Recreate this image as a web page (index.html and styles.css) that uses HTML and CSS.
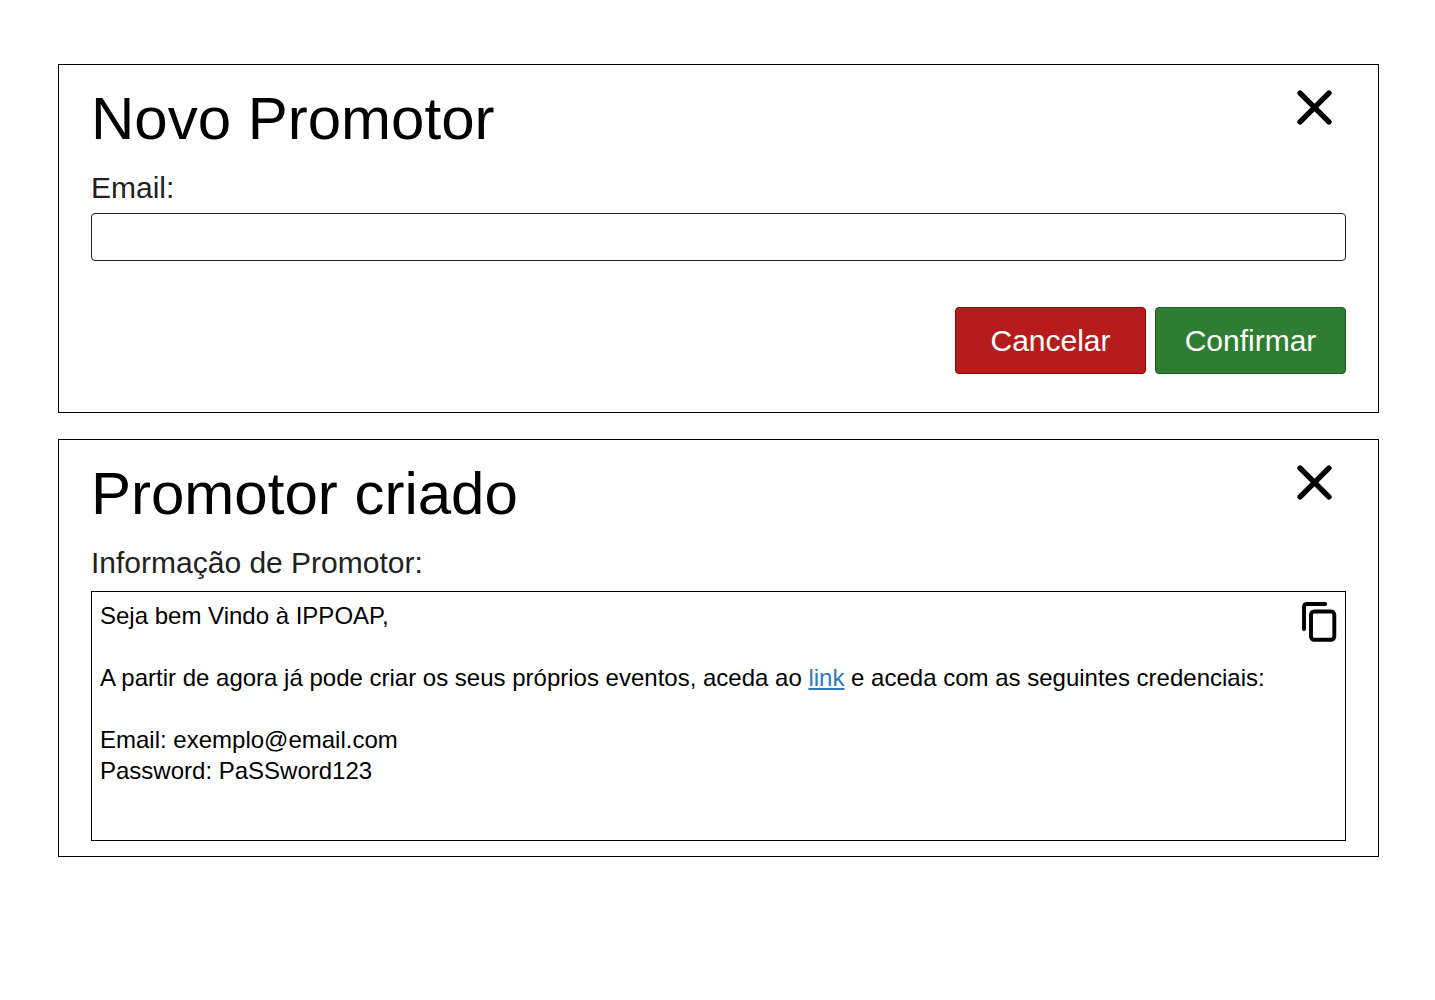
FILE: index.html
```html
<!DOCTYPE html>
<html lang="pt">
<head>
  <meta charset="utf-8">
  <meta name="viewport" content="width=device-width, initial-scale=1">
  <title>Novo Promotor</title>
  <link rel="stylesheet" href="styles.css">
</head>
<body>
  <main class="page">
    <section class="card card--form" aria-labelledby="new-title">
      <header class="card-header">
        <h1 class="card-title" id="new-title">Novo Promotor</h1>
        <button class="icon-button close-button" type="button" aria-label="Fechar">
          <svg width="35" height="35" viewBox="0 0 35 35" fill="none" stroke="currentColor" stroke-width="5.5" stroke-linecap="round" aria-hidden="true">
            <path d="M3.1 3.1L31.9 31.9M31.9 3.1L3.1 31.9"/>
          </svg>
        </button>
      </header>
      <form>
        <label class="label" for="email">Email:</label>
        <input class="text-input" id="email" type="email">
        <div class="actions">
          <button class="button button--cancel" type="button">Cancelar</button>
          <button class="button button--confirm" type="submit">Confirmar</button>
        </div>
      </form>
    </section>

    <section class="card card--info" aria-labelledby="created-title">
      <header class="card-header">
        <h2 class="card-title" id="created-title">Promotor criado</h2>
        <button class="icon-button close-button" type="button" aria-label="Fechar">
          <svg width="35" height="35" viewBox="0 0 35 35" fill="none" stroke="currentColor" stroke-width="5.5" stroke-linecap="round" aria-hidden="true">
            <path d="M3.1 3.1L31.9 31.9M31.9 3.1L3.1 31.9"/>
          </svg>
        </button>
      </header>
      <h3 class="label">Informação de Promotor:</h3>
      <div class="message">
        <div class="message-text">
          <p>Seja bem Vindo à IPPOAP,</p>
          <p>A partir de agora já pode criar os seus próprios eventos, aceda ao <a class="link" href="#">link</a> e aceda com as seguintes credenciais:</p>
          <p>Email: exemplo@email.com<br>Password: PaSSword123</p>
        </div>
        <button class="icon-button copy-button" type="button" aria-label="Copiar">
          <svg width="35" height="40" viewBox="0 0 35 40" fill="none" stroke="currentColor" stroke-width="3.9" stroke-linecap="round" aria-hidden="true">
            <path d="M2 27V5Q2 2 5 2H23.2"/>
            <rect x="9" y="9.5" width="23.3" height="28.3" rx="3.2"/>
          </svg>
        </button>
      </div>
    </section>
  </main>
</body>
</html>
```

FILE: styles.css
```css
*,
*::before,
*::after {
  box-sizing: border-box;
}

body {
  margin: 0;
  background: #fff;
  color: #000;
  font-family: Arial, "Liberation Sans", sans-serif;
}

.page {
  display: flex;
  flex-direction: column;
  gap: 26px;
  padding: 64px 56px 64px 58px;
}

.card {
  padding: 20px 32px;
  border: 1px solid #000;
}

.card--form {
  padding-bottom: 38px;
}

.card--info {
  padding-bottom: 15px;
}

.card-header {
  display: flex;
  align-items: flex-start;
  justify-content: space-between;
  margin-bottom: 18px;
}

.card-title {
  margin: 0;
  font-size: 60px;
  font-weight: 400;
  line-height: 68px;
}

.icon-button {
  flex: none;
  padding: 0;
  border: 0;
  background: none;
  color: #000;
  cursor: pointer;
}

.icon-button svg {
  display: block;
}

.close-button {
  margin: 5px 14px 0 0;
}

.label {
  display: block;
  margin: 0 0 8px;
  color: #212121;
  font-size: 30px;
  font-weight: 400;
  line-height: 34px;
}

.text-input {
  display: block;
  width: 100%;
  height: 48px;
  padding: 0 8px;
  border: 1px solid #212121;
  border-radius: 4px;
  background: #fff;
  font: inherit;
  font-size: 24px;
}

.actions {
  display: flex;
  justify-content: flex-end;
  gap: 9px;
  margin-top: 46px;
}

.button {
  width: 191px;
  height: 67px;
  padding: 0;
  border: 1px solid;
  border-radius: 4px;
  color: #fff;
  font: inherit;
  font-size: 30px;
  cursor: pointer;
}

.button--cancel {
  border-color: #8e0000;
  background: #b71c1c;
}

.button--confirm {
  border-color: #1b5e20;
  background: #2e7d32;
}

.message {
  display: flex;
  align-items: flex-start;
  justify-content: space-between;
  gap: 16px;
  min-height: 250px;
  margin-top: 11px;
  padding: 8px;
  border: 1px solid #000;
}

.message-text {
  font-size: 24px;
  line-height: 31px;
}

.message-text p {
  margin: 0 0 31px;
}

.copy-button {
  margin-top: 2px;
}

.link {
  color: #2e78be;
}
```
